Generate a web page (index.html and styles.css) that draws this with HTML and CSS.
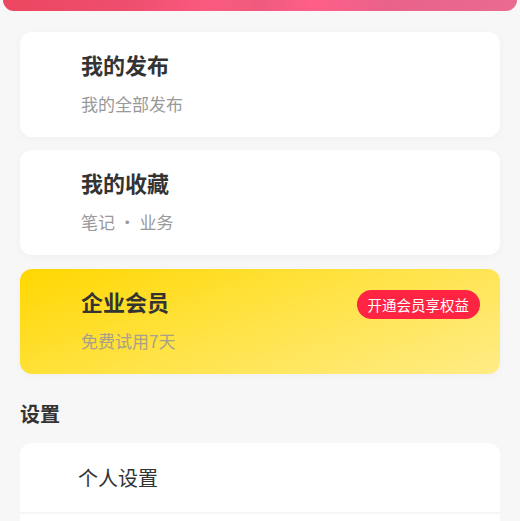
FILE: index.html
```html
<!doctype html>
<html>
<head>
<meta charset="utf-8">
<meta name="viewport" content="width=device-width, initial-scale=1.0">
<link rel="stylesheet" href="styles.css">
<title>我的</title>
</head>
<body>
<div class="banner"></div>

<div class="page">
	<div class="card">
		<h3 class="card-title">我的发布</h3>
		<p class="card-sub">我的全部发布</p>
	</div>

	<div class="card">
		<h3 class="card-title">我的收藏</h3>
		<p class="card-sub">笔记 · 业务</p>
	</div>

	<div class="card card-vip">
		<div class="card-head">
			<h3 class="card-title">企业会员</h3>
			<span class="badge">开通会员享权益</span>
		</div>
		<p class="card-sub">免费试用7天</p>
	</div>

	<h4 class="section">设置</h4>

	<ul class="menu">
		<li>个人设置</li>
		<li></li>
	</ul>
</div>
</body>
</html>
```

FILE: styles.css
```css
h3,
h4,
p,
ul {
    margin: 0;
    padding: 0;
}
body {
    font-family: "Noto Sans CJK SC", "Noto Sans", sans-serif;
    color: #333;
    background-color: #f7f7f7;
    margin: 0;
    height: 521px;
    overflow: hidden;
}
.banner {
    height: 11px;
    margin: 0 3px;
    border-radius: 0 0 14px 14px;
    background: linear-gradient(90deg, #ec4660 0%, #ee4f6e 25%, #fb5a80 40%, #f05a7e 50%, #ff5f88 60%, #e9628a 75%, #ea6b92 100%);
}
.page {
    padding: 21px 20px 0;
}
.card {
    height: 105px;
    box-sizing: border-box;
    padding: 17px 20px 0 61px;
    margin-bottom: 13px;
    background: #fff;
    border-radius: 12px;
    box-shadow: 0 2px 10px rgba(0, 0, 0, 0.03);
}
.card-title {
    font-size: 22px;
    line-height: 30px;
    font-weight: bold;
    color: #333;
}
.card-sub {
    margin-top: 13px;
    font-size: 17px;
    line-height: 24px;
    color: #999;
}
.card-vip {
    margin-top: 14px;
    padding-top: 17px;
    background: linear-gradient(160deg, #ffd700 0%, #ffe347 50%, #ffec86 100%);
}
.card-vip .card-sub {
    color: #a7a18a;
}
.card-head {
    display: flex;
    justify-content: space-between;
    align-items: center;
    height: 30px;
}
.badge {
    height: 29px;
    line-height: 29px;
    margin-top: 6px;
    padding: 0 11px;
    border-radius: 15px;
    background: #ff2442;
    color: #fff;
    font-size: 14.5px;
}
.section {
    margin-top: 26px;
    font-size: 20px;
    line-height: 28px;
    font-weight: bold;
    color: #333;
}
.menu {
    list-style: none;
    margin-top: 15px;
    background: #fff;
    border-radius: 12px 12px 0 0;
}
.menu li {
    height: 69px;
    line-height: 69px;
    padding-left: 58px;
    font-size: 20px;
    color: #333;
    border-bottom: 2px solid #f5f5f5;
}
```
